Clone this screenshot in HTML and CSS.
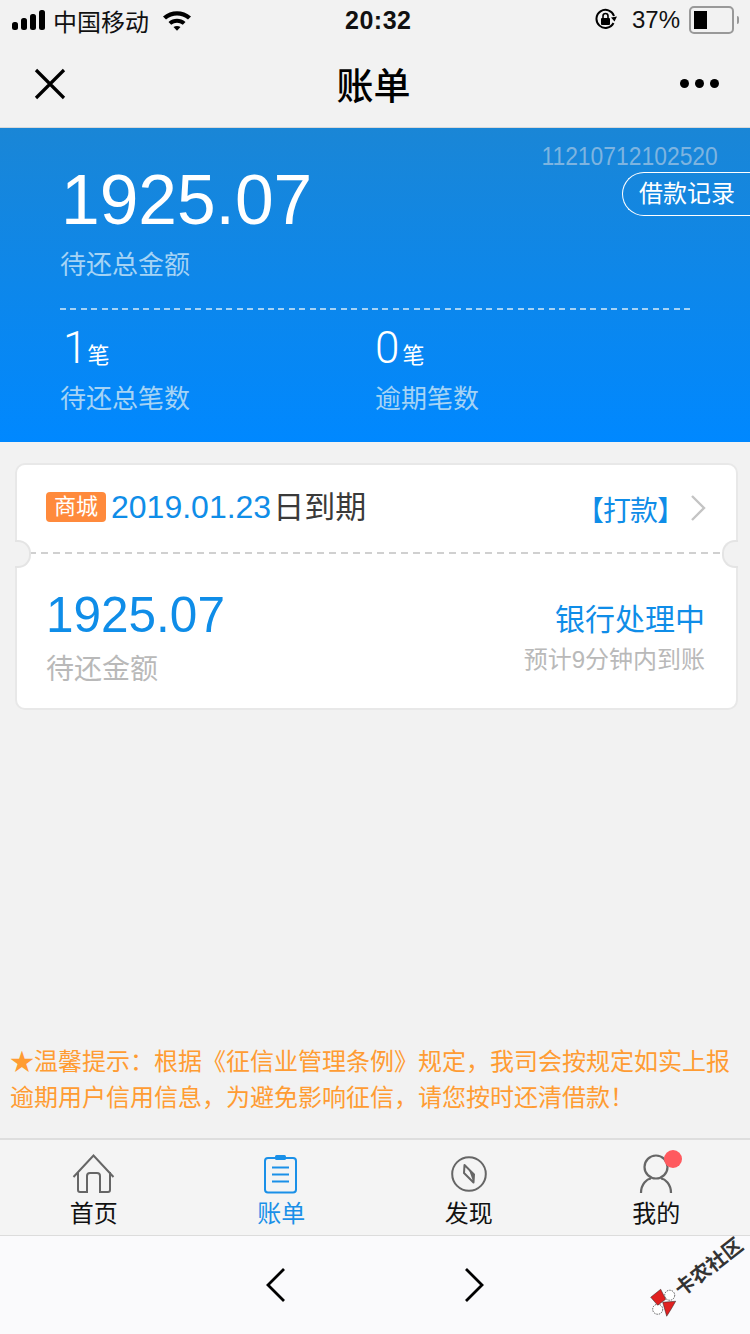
FILE: index.html
```html
<!DOCTYPE html>
<html lang="zh-CN">
<head>
    <meta charset="UTF-8">
    <meta name="viewport" content="width=device-width, initial-scale=1.0">
    <title>账单</title>
    <link rel="stylesheet" href="styles.css">
</head>
<body>
<div class="page">
    <div class="status-bar">
        <div class="status-left">
            <svg class="signal" width="34" height="20" viewBox="0 0 34 20"><rect x="0" y="12" width="6" height="8" rx="2.5"/><rect x="9" y="8" width="6" height="12" rx="2.5"/><rect x="18" y="4" width="6" height="16" rx="2.5"/><rect x="27" y="0" width="6" height="20" rx="2.5"/></svg>
            <span>中国移动</span>
            <svg class="wifi" width="30" height="22" viewBox="0 0 30 22"><path d="M1 7.5C9 .5 21 .5 29 7.500L26 10.500C19.500 5 10.500 5 4 10.500Z"/><path d="M6.500 13C11.500 8.800 18.500 8.800 23.500 13L20.800 15.800C17.200 13 12.800 13 9.200 15.800Z"/><path d="M11.500 18C13.500 16.500 16.500 16.500 18.500 18L15 21.800Z"/></svg>
        </div>
        <div class="status-time">20:32</div>
        <div class="status-right">
            <svg class="rotate-lock" width="24" height="24" viewBox="0 0 24 24"><path d="M19.500 15A9 9 0 1 1 20 8" fill="none" stroke="#000" stroke-width="2"/><path d="M23 8.500L17 9.500L20.500 13.500Z"/><rect x="7" y="10" width="9" height="7" rx="1"/><path d="M9 10V8a2.500 2.500 0 0 1 5 0v2" fill="none" stroke="#000" stroke-width="1.600"/></svg>
            <span class="battery-pct">37%</span>
            <div class="battery"><div class="battery-fill"></div></div>
            <div class="battery-cap"></div>
        </div>
    </div>

    <div class="nav-bar">
        <svg width="34" height="34" viewBox="0 0 34 34"><path d="M3 3L31 31M31 3L3 31" fill="none" stroke="#000" stroke-width="3.200"/></svg>
        <div class="nav-title">账单</div>
        <div class="nav-more"><i></i><i></i><i></i></div>
    </div>

    <div class="hero">
        <div class="hero-top">
            <div class="hero-total">
                <div class="total-num">1925.07</div>
                <div class="hero-label">待还总金额</div>
            </div>
            <div class="hero-side">
                <div class="serial">11210712102520</div>
                <div class="record-btn">借款记录</div>
            </div>
        </div>
        <div class="hero-line"></div>
        <div class="hero-stats">
            <div class="stat">
                <div class="stat-num">1<span>笔</span></div>
                <div class="hero-label">待还总笔数</div>
            </div>
            <div class="stat">
                <div class="stat-num">0<span>笔</span></div>
                <div class="hero-label">逾期笔数</div>
            </div>
        </div>
    </div>

    <div class="content">
        <div class="bill-card">
            <div class="bill-head">
                <span class="tag">商城</span>
                <span class="bill-date">2019.01.23</span>
                <span class="bill-due">日到期</span>
                <span class="bill-pay">【打款】</span>
                <svg class="bill-arrow" width="16" height="28" viewBox="0 0 16 28"><path d="M2 2L14 14L2 26" fill="none" stroke="#c4c4c4" stroke-width="2.400"/></svg>
            </div>
            <div class="bill-body">
                <div>
                    <div class="bill-num">1925.07</div>
                    <div class="bill-label">待还金额</div>
                </div>
                <div class="bill-state">
                    <div class="state-main">银行处理中</div>
                    <div class="state-sub">预计9分钟内到账</div>
                </div>
            </div>
            <div class="notch notch-left"></div>
            <div class="notch notch-right"></div>
        </div>

        <div class="notice">★温馨提示：根据《征信业管理条例》规定，我司会按规定如实上报逾期用户信用信息，为避免影响征信，请您按时还清借款！</div>
    </div>

    <div class="tab-bar">
        <div class="tab">
            <svg width="44" height="40" viewBox="0 0 44 40" fill="none" stroke="#666" stroke-width="2"><path d="M1.500 23L21.500 1.500L41.500 23"/><path d="M6 18V36a2 2 0 0 0 2 2H15V22a3 3 0 0 1 3-3h7a3 3 0 0 1 3 3V38h8a2 2 0 0 0 2-2V18"/></svg>
            <span>首页</span>
        </div>
        <div class="tab tab-on">
            <svg width="36" height="40" viewBox="0 0 36 40" fill="none" stroke="#1a90e8" stroke-width="2"><rect x="2" y="4" width="31" height="34.500" rx="3"/><rect x="12" y="1" width="11" height="5" rx="1.500" fill="#1a90e8" stroke="none"/><path d="M9 13.500H26M9 20.500H26M9 27.500H26"/></svg>
            <span>账单</span>
        </div>
        <div class="tab">
            <svg width="38" height="40" viewBox="0 0 38 40"><circle cx="19" cy="20" r="16.800" fill="none" stroke="#666" stroke-width="2"/><path d="M14.500 11L24 20.500L23.500 28.500L14 19Z" fill="none" stroke="#666" stroke-width="2" stroke-linejoin="round"/><path d="M19 16L24 20.500L23.500 28.500Z" fill="#666"/></svg>
            <span>发现</span>
        </div>
        <div class="tab">
            <div class="user-icon">
                <svg width="34" height="40" viewBox="0 0 34 40" fill="none" stroke="#666" stroke-width="2.200"><circle cx="17" cy="13" r="11.500"/><path d="M2 39C2 30 8 25 12 24.500M32 39C32 30 26 25 22 24.500"/></svg>
                <i class="red-dot"></i>
            </div>
            <span>我的</span>
        </div>
    </div>

    <div class="bottom-bar">
        <svg width="20" height="36" viewBox="0 0 20 36"><path d="M18 2L2 18L18 34" fill="none" stroke="#000" stroke-width="2.800"/></svg>
        <svg width="20" height="36" viewBox="0 0 20 36"><path d="M2 2L18 18L2 34" fill="none" stroke="#000" stroke-width="2.800"/></svg>
        <div class="watermark">
            <svg width="30" height="30" viewBox="0 0 30 30"><g transform="rotate(38 15 15)"><circle cx="21" cy="8" r="5" fill="#fff" stroke="#333" stroke-width=".8" stroke-dasharray="1.500 1"/><circle cx="9" cy="22" r="5" fill="#fff" stroke="#333" stroke-width=".8" stroke-dasharray="1.500 1"/><path d="M2 10L12 2L17 12L9 18Z" fill="#e02020" stroke="#222" stroke-width=".5"/><path d="M14 15L27 14L23 21L18 29Z" fill="#e02020" stroke="#222" stroke-width=".5"/></g></svg>
            <span>卡农社区</span>
        </div>
    </div>
</div>
</body>
</html>
```

FILE: styles.css
```css
body, html {
    margin: 0;
    padding: 0;
    width: 100%;
    height: 100%;
    overflow: hidden;
    font-family: "Liberation Sans", "Noto Sans CJK SC", sans-serif;
    background: #f2f2f2;
}
.page {
    display: flex;
    flex-direction: column;
    height: 1334px;
}

/* status bar */
.status-bar {
    display: flex;
    align-items: center;
    justify-content: space-between;
    height: 40px;
    padding: 0 11px 0 12px;
    position: relative;
    color: #111;
    font-size: 24px;
}
.status-left, .status-right {
    display: flex;
    align-items: center;
}
.status-left span {
    margin-left: 7px;
}
.wifi {
    margin-left: 13px;
}
.status-time {
    position: absolute;
    left: 345px;
    font-size: 25px;
    font-weight: bold;
    letter-spacing: 0.5px;
}
.rotate-lock {
    margin-right: 14px;
}
.battery-pct {
    margin-right: 9px;
    font-size: 24px;
}
.battery {
    width: 35px;
    height: 18px;
    padding: 3px;
    border: 2px solid #999;
    border-radius: 5px;
}
.battery-fill {
    width: 13px;
    height: 18px;
    background: #000;
}
.battery-cap {
    width: 2px;
    height: 8px;
    background: #999;
    margin-left: 3px;
    border-radius: 0 2px 2px 0;
}

/* nav */
.nav-bar {
    display: flex;
    align-items: center;
    justify-content: space-between;
    height: 87px;
    padding: 0 31px 0 33px;
    border-bottom: 1px solid #d9d9d9;
}
.nav-title {
    font-size: 37px;
    font-weight: 500;
    color: #000;
}
.nav-more {
    display: flex;
    gap: 6px;
}
.nav-more i {
    width: 9px;
    height: 9px;
    border-radius: 50%;
    background: #000;
}

/* blue summary */
.hero {
    height: 314px;
    box-sizing: border-box;
    background: linear-gradient(#1a86d6, #0088ff);
    padding-left: 60px;
    color: #fff;
}
.hero-top {
    display: flex;
    justify-content: space-between;
    height: 180px;
}
.total-num {
    font-size: 69.500px;
    line-height: 80px;
    margin: 32px 0 0 1px;
}
.hero-label {
    font-size: 26px;
    line-height: 36px;
    color: #a5d3f5;
}
.total-num + .hero-label {
    margin-top: 7px;
}
.hero-side {
    display: flex;
    flex-direction: column;
    align-items: flex-end;
}
.serial {
    font-size: 25px;
    line-height: 30px;
    margin: 13px 32px 0 0;
    color: #7db4e0;
    transform: scaleX(0.915);
    transform-origin: right center;
}
.record-btn {
    box-sizing: border-box;
    width: 128px;
    height: 44px;
    margin-top: 1px;
    border: 1px solid #fff;
    border-right: none;
    border-radius: 22px 0 0 22px;
    padding-left: 16px;
    font-size: 24px;
    line-height: 41px;
}
.hero-line {
    width: 630px;
    height: 2px;
    background: repeating-linear-gradient(90deg, #a5d3f5 0 6px, transparent 6px 10.400px);
}
.hero-stats {
    display: grid;
    grid-template-columns: 315px 1fr;
    margin-top: 12px;
}
.stat-num {
    font-family: Roboto, "Noto Sans CJK SC", sans-serif;
    font-size: 44px;
    line-height: 52px;
    padding-left: 3px;
    font-weight: 300;
}
.stat-num span {
    font-size: 22px;
    font-weight: 400;
}
.stat + .stat .stat-num {
    padding-left: 0;
}
.stat + .stat .stat-num span {
    margin-left: 3px;
}
.stat .hero-label {
    margin-top: -1px;
}

/* bill card */
.content {
    flex: 1;
    display: flex;
    flex-direction: column;
    padding: 21px 0 22px;
    min-height: 0;
}
.bill-card {
    position: relative;
    box-sizing: border-box;
    width: 723px;
    height: 247px;
    margin-left: 15px;
    background: #fff;
    border: 2px solid #e8e8e8;
    border-radius: 10px;
}
.bill-head {
    display: flex;
    align-items: center;
    box-sizing: border-box;
    height: 89px;
    padding: 0 30px 6px 29px;
    background: repeating-linear-gradient(90deg, #d0d0d0 0 7px, transparent 7px 12px) left bottom / 100% 2px no-repeat;
}
.tag {
    width: 60px;
    height: 30px;
    background: #ff8a3c;
    border-radius: 4px;
    color: #fff;
    font-size: 22px;
    line-height: 30px;
    text-align: center;
    margin-right: 5px;
}
.bill-date {
    font-size: 32px;
    margin-top: 2px;
    color: #0f8de8;
}
.bill-due {
    font-size: 31px;
    color: #3a3a3a;
    margin: -4px 0 0 2px;
}
.bill-pay {
    margin-left: auto;
    font-size: 28px;
    letter-spacing: -1px;
    color: #0f8de8;
    margin-right: 6px;
    margin-top: 5px;
}
.bill-arrow {
    margin-top: 3px;
}
.bill-body {
    display: flex;
    justify-content: space-between;
    padding: 32px 31px 0 29px;
}
.bill-num {
    font-size: 49.500px;
    line-height: 58px;
    color: #0f8de8;
}
.bill-label {
    font-size: 28px;
    line-height: 40px;
    margin-top: 6px;
    color: #b9b9b9;
}
.bill-state {
    text-align: right;
    padding-top: 14px;
}
.state-main {
    font-size: 30px;
    line-height: 40px;
    color: #0f8de8;
}
.state-sub {
    font-size: 24px;
    line-height: 36px;
    margin-top: 2px;
    color: #b9b9b9;
}
.notch {
    position: absolute;
    top: 75px;
    width: 14px;
    height: 24px;
    background: #f2f2f2;
    border: 2px solid #e4e4e4;
}
.notch-left {
    left: -2px;
    border-left: none;
    border-radius: 0 13px 13px 0;
}
.notch-right {
    right: -2px;
    border-right: none;
    border-radius: 13px 0 0 13px;
}

.notice {
    margin-top: auto;
    padding: 0 10px;
    font-size: 24px;
    line-height: 36px;
    color: #ff9c33;
}

/* tabs */
.tab-bar {
    display: grid;
    grid-template-columns: repeat(4, 1fr);
    height: 98px;
    box-sizing: border-box;
    background: #f4f4f4;
    border-top: 2px solid #dedede;
    border-bottom: 1px solid #dcdcdc;
}
.tab {
    display: flex;
    flex-direction: column;
    align-items: center;
    padding-top: 14px;
    font-size: 24px;
    line-height: 34px;
    color: #111;
}
.tab svg {
    display: block;
}
.tab span {
    margin-top: 3px;
}
.tab-on {
    color: #1a90e8;
}
.user-icon {
    position: relative;
}
.red-dot {
    position: absolute;
    top: -4px;
    right: -9px;
    width: 18px;
    height: 18px;
    border-radius: 50%;
    background: #ff5a5f;
}

/* browser bar */
.bottom-bar {
    position: relative;
    height: 98px;
    display: flex;
    align-items: center;
    justify-content: center;
    gap: 178px;
    background: #fafafc;
    box-sizing: border-box;
}
.watermark {
    position: absolute;
    left: 640px;
    top: 26px;
    display: flex;
    align-items: center;
    gap: 2px;
    transform: rotate(-38deg);
    color: #333;
    font-size: 20px;
    line-height: 26px;
    font-weight: bold;
    white-space: nowrap;
}
```
